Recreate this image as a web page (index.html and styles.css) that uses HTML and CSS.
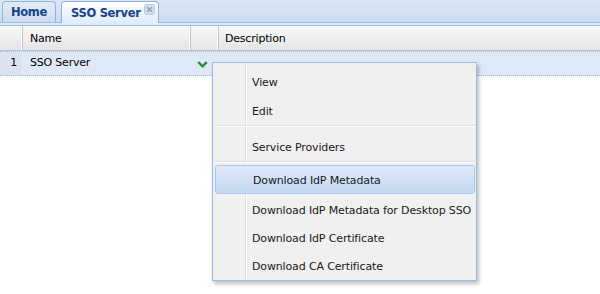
FILE: index.html
```html
<!DOCTYPE html>
<html>
<head>
<meta charset="utf-8">
<link rel="stylesheet" href="styles.css">
</head>
<body>
<div class="tabbar">
  <div class="tab">Home</div>
  <div class="tab active">SSO Server
    <svg class="close" width="11" height="11" viewBox="0 0 11 11"><rect x="0.5" y="0.5" width="10" height="10" rx="2" fill="#d3dcea" stroke="#bccadd"/><path d="M3.2 3.2 L7.8 7.8 M7.8 3.2 L3.2 7.8" stroke="#8ea3bf" stroke-width="1.6"/></svg>
  </div>
</div>
<div class="strip"></div>
<div class="grid">
  <div class="hdr">
    <div class="c num"></div>
    <div class="c name">Name</div>
    <div class="c act"></div>
    <div class="c desc">Description</div>
  </div>
  <div class="row">
    <div class="c num">1</div>
    <div class="c name">SSO Server</div>
    <div class="c act"><svg width="11" height="7" viewBox="0 0 11 7"><path d="M1.2 1.2 L5.5 5.3 L9.8 1.2" fill="none" stroke="#2c8c3a" stroke-width="2.4"/></svg></div>
    <div class="c desc"></div>
  </div>
</div>
<div class="menu">
  <div class="item">View</div>
  <div class="item">Edit</div>
  <div class="sep"></div>
  <div class="item">Service Providers</div>
  <div class="sep sep2"></div>
  <div class="item hover">Download IdP Metadata</div>
  <div class="item">Download IdP Metadata for Desktop SSO</div>
  <div class="item short">Download IdP Certificate</div>
  <div class="item short">Download CA Certificate</div>
</div>
</body>
</html>
```
FILE: styles.css
```css
html, body { margin: 0; padding: 0; background: #fff; }
body { font-family: "DejaVu Sans", Verdana, sans-serif; font-size: 11px; letter-spacing: -0.2px; color: #000; width: 600px; height: 294px; overflow: hidden; position: relative; }
.tabbar { height: 22px; background: linear-gradient(#dbe7f5, #cddcf0); border-bottom: 1px solid #99bbe8; display: flex; align-items: flex-end; gap: 5px; padding-left: 2px; }
.tab { height: 21px; box-sizing: border-box; border: 1px solid #8db2e3; border-bottom: none; border-radius: 4px 4px 0 0; background: linear-gradient(#e3ebf5, #cfdcee); color: #15428b; font-weight: bold; font-size: 11.5px; letter-spacing: -0.3px; line-height: 21px; padding: 0; width: 54px; text-align: center; }
.tab.active { width: 98px; height: 22px; margin-bottom: -1px; background: linear-gradient(#ffffff, #deecfd); text-align: left; padding-left: 9px; line-height: 22px; position: relative; }
.close { position: absolute; right: 3px; top: 2px; }
.strip { height: 2px; background: #deecfd; border-bottom: 1px solid #99bbe8; }
.hdr { display: flex; height: 24px; background: linear-gradient(#f9f9f9, #e3e4e6); border-bottom: 1px solid #c5c5c5; }
.hdr .c { line-height: 25px; border-right: 1px solid #c5c5c5; box-shadow: inset -1px 0 0 #fff; }
.c { box-sizing: border-box; flex: none; white-space: nowrap; overflow: hidden; }
.num { width: 23px; text-align: right; padding-right: 5px; }
.name { width: 168px; padding-left: 7px; }
.act { width: 28px; }
.desc { flex: 1; padding-left: 6px; }
.hdr .desc { border-right: none; box-shadow: none; }
.row { display: flex; height: 23px; background: #dfe8f6; border-top: 1px dotted #a3bae9; border-bottom: 1px dotted #a3bae9; }
.row .c { line-height: 21px; }
.row .num { background: #d9e3f2; border-right: 1px solid #e6edf8; }
.row .act { padding-left: 6px; padding-top: 9px; line-height: 0; }
.menu { position: absolute; left: 212px; top: 62px; width: 265px; height: 219px; box-sizing: border-box; border: 1px solid #99bbe8; background: #f0f0f0 linear-gradient(to right, transparent 32px, #e0e0e0 32px, #e0e0e0 33px, #fff 33px, #fff 34px, transparent 34px); box-shadow: 2px 3px 4px rgba(0,0,0,0.25); padding-top: 3px; }
.item { height: 29px; line-height: 25px; padding: 4px 0 0 39px; box-sizing: border-box; white-space: nowrap; color: #1a1a1a; letter-spacing: -0.14px; }
.item.short { height: 28px; line-height: 24px; }
.item.hover { margin: 0 1px 0 2px; padding: 3px 0 0 37px; border: 1px solid #a9c8ee; border-radius: 3px; background: linear-gradient(#dfeaf9, #c4d8f3); line-height: 24px; }
.sep { height: 7px; position: relative; }
.sep::after { content: ""; position: absolute; left: 2px; right: 0; top: 1px; height: 1px; background: #e0e0e0; box-shadow: 0 1px 0 #fff; }
.sep2 { height: 5px; }
```
